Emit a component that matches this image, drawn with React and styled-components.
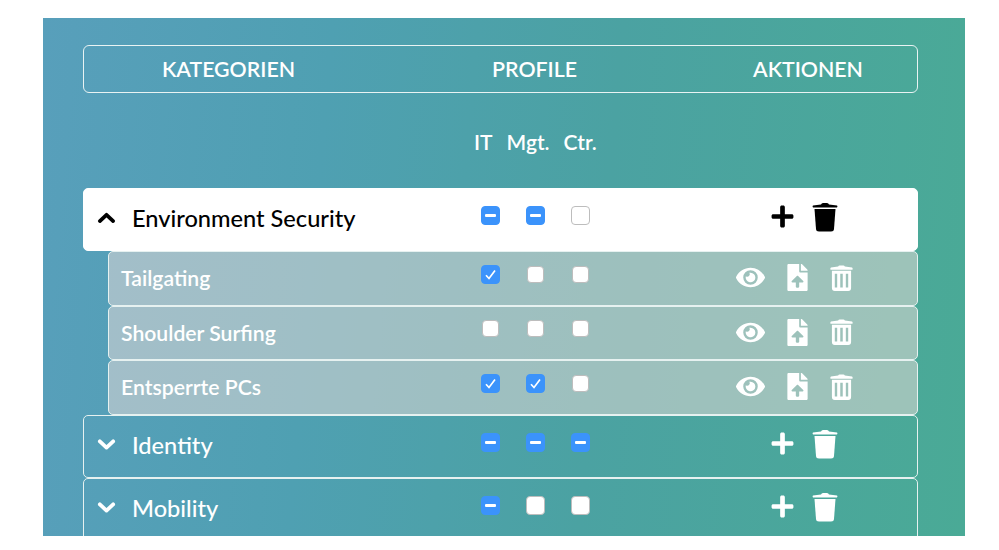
import React from 'react'
import styled, { createGlobalStyle } from 'styled-components'
import { FaEye, FaFileUpload, FaPlus } from 'react-icons/fa'

const GlobalStyle = createGlobalStyle`
  html, body {
    margin: 0;
    padding: 0;
    background: #fff;
    overflow: hidden;
  }
`
const Page = styled.div`
  width: 999px;
  height: 550px;
  padding: 18px 34px 14px 43px;
  box-sizing: border-box;
  font-family: Lato, "Open Sans", sans-serif;
`
const Panel = styled.main`
  height: 518px;
  padding: 27px 47px 0 40px;
  box-sizing: border-box;
  overflow: hidden;
  color: #fff;
  background: linear-gradient(95deg, #589fbb 0%, #4fa0b2 30%, #4ba2a2 60%, #4aaa96 100%);
`
const HeaderBar = styled.div`
  height: 48px;
  display: grid;
  grid-template-columns: 289px 323px 1fr;
  align-items: center;
  border: 1px solid #e9f3f3;
  border-radius: 6px;
  box-sizing: border-box;
`
const HeaderLabel = styled.div`
  text-align: center;
  font-size: 21.3px;
  font-weight: 600;
  text-transform: uppercase;
  padding-left: ${props => props.$shift || 0}px;
  padding-bottom: 1px;
`
const ProfileRow = styled.div`
  height: 95px;
  display: flex;
  gap: 14px;
  padding-left: 391px;
  padding-top: 37px;
  box-sizing: border-box;
  font-size: 21px;
  font-weight: 600;
  line-height: 24px;
`
const ProfileLabel = styled.div`
  white-space: nowrap;
`
const Row = styled.div`
  display: grid;
  grid-template-columns: ${props => props.$sub ? '359px 135px 1fr' : '384px 135px 1fr'};
  align-items: center;
  box-sizing: border-box;
  height: ${props => props.$sub ? (props.$tall ? 55 : 54) : 63}px;
  margin-left: ${props => props.$sub ? 25 : 0}px;
  border: 1px solid ${props => props.$open ? '#fff' : '#e6f1f0'};
  border-radius: 5px;
  color: ${props => props.$open ? '#000' : '#fff'};
  background: ${props => props.$open ? '#fff' : props.$sub ? 'rgba(240, 222, 218, 0.5)' : 'transparent'};
`
const Title = styled.div`
  display: flex;
  align-items: center;
  gap: 16px;
  padding-left: 13px;
  padding-bottom: 3px;
  font-size: 23.6px;
  font-weight: 500;
`
const SubTitle = styled.div`
  padding-left: 12px;
  padding-bottom: 1px;
  font-size: 21.2px;
  font-weight: 600;
`
const Checks = styled.div`
  display: flex;
  padding-bottom: 9px;
`
const CheckCell = styled.div`
  width: 45px;
  display: flex;
  align-items: center;
  justify-content: center;
`
const Box = styled.span`
  width: ${props => props.$state === 'off' && props.$small ? 17 : 19}px;
  height: ${props => props.$state === 'off' && props.$small ? 17 : 19}px;
  box-sizing: border-box;
  display: flex;
  align-items: center;
  justify-content: center;
  border-radius: 4px;
  background: ${props => props.$state === 'off' ? '#fff' : '#3b93fb'};
  border: ${props => props.$state === 'off' && !props.$small ? 1.5 : 1}px solid ${props => props.$state === 'off' ? '#bdbdbd' : '#3b93fb'};
`
const Dash = styled.span`
  width: 11px;
  height: 3px;
  border-radius: 1px;
  background: #fff;
`
const Actions = styled.div`
  display: flex;
  align-items: center;
  gap: ${props => props.$sub ? 19 : 17}px;
  padding-left: ${props => props.$sub ? 133 : 167}px;
  padding-bottom: ${props => props.$sub ? 2 : 6}px;
  color: ${props => props.$open ? '#000' : '#fff'};
`

const Check = ({ state, small }) => (
  <CheckCell>
    <Box $state={state} $small={small}>
      {state === 'mixed' && <Dash />}
      {state === 'on' && (
        <svg width="13" height="13" viewBox="0 0 13 13" fill="none">
          <path d="M2 7.2 L5 10.5 L11 2.5" stroke="#fff" strokeWidth="1.7" />
        </svg>
      )}
    </Box>
  </CheckCell>
)

const Chevron = ({ up }) => (
  <svg width="19" height="11.4" viewBox="0 0 20 12" fill="none" stroke="currentColor" strokeWidth="4" strokeLinecap="round" strokeLinejoin="round">
    <path d={up ? 'M3 9.5 L10 3 L17 9.5' : 'M3 2.5 L10 9 L17 2.5'} />
  </svg>
)

const SolidTrash = () => (
  <svg width="26" height="30" viewBox="0 0 26 30" fill="currentColor">
    <path d="M9 2.5 Q9.5 1 11 1 H15 Q16.5 1 17 2.5 L25 3.5 Q26 4 25 5.5 H1 Q0 4 1 3.5 Z" />
    <path d="M2.5 7 H23.5 L22 27 Q21.8 29.5 19 29.5 H7 Q4.2 29.5 4 27 Z" />
  </svg>
)

const OutlineTrash = () => (
  <svg width="23" height="26" viewBox="0 0 24 27" fill="currentColor">
    <path d="M8.5 1.5 Q9 0.5 10 0.5 H14 Q15 0.5 15.5 1.5 L23 2.5 Q24 3 23.5 5 H0.5 Q0 3 1 2.5 Z" />
    <path fillRule="evenodd" d="M2 6 H22 V24 Q22 27 19 27 H5 Q2 27 2 24 Z M5 9 V23.5 H7.5 V9 Z M10.7 9 V23.5 H13.3 V9 Z M16.5 9 V23.5 H19 V9 Z" />
  </svg>
)

const categories = {
  environment: ['mixed', 'mixed', 'off'],
  identity: ['mixed', 'mixed', 'mixed'],
  mobility: ['mixed', 'off', 'off'],
}

const topics = [
  { name: 'Tailgating', checks: ['on', 'off', 'off'], tall: true },
  { name: 'Shoulder Surfing', checks: ['off', 'off', 'off'] },
  { name: 'Entsperrte PCs', checks: ['on', 'on', 'off'], tall: true },
]

const Category = ({ name, checks, open }) => (
  <Row $open={open}>
    <Title>
      <Chevron up={open} />
      {name}
    </Title>
    <Checks>
      {checks.map((c, i) => <Check key={i} state={c} />)}
    </Checks>
    <Actions $open={open}>
      <FaPlus size={25} />
      <SolidTrash />
    </Actions>
  </Row>
)

const Topic = ({ name, checks, tall }) => (
  <Row $sub $tall={tall}>
    <SubTitle>{name}</SubTitle>
    <Checks>
      {checks.map((c, i) => <Check key={i} state={c} small />)}
    </Checks>
    <Actions $sub>
      <FaEye size={29} />
      <FaFileUpload size={27} />
      <OutlineTrash />
    </Actions>
  </Row>
)

const App = () => (
  <Page>
    <GlobalStyle />
    <Panel>
      <HeaderBar>
        <HeaderLabel>Kategorien</HeaderLabel>
        <HeaderLabel>Profile</HeaderLabel>
        <HeaderLabel $shift={3}>Aktionen</HeaderLabel>
      </HeaderBar>
      <ProfileRow>
        <ProfileLabel>IT</ProfileLabel>
        <ProfileLabel>Mgt.</ProfileLabel>
        <ProfileLabel>Ctr.</ProfileLabel>
      </ProfileRow>
      <Category name="Environment Security" checks={categories.environment} open />
      {topics.map(t => <Topic key={t.name} {...t} />)}
      <Category name="Identity" checks={categories.identity} />
      <Category name="Mobility" checks={categories.mobility} />
    </Panel>
  </Page>
)

export default App
